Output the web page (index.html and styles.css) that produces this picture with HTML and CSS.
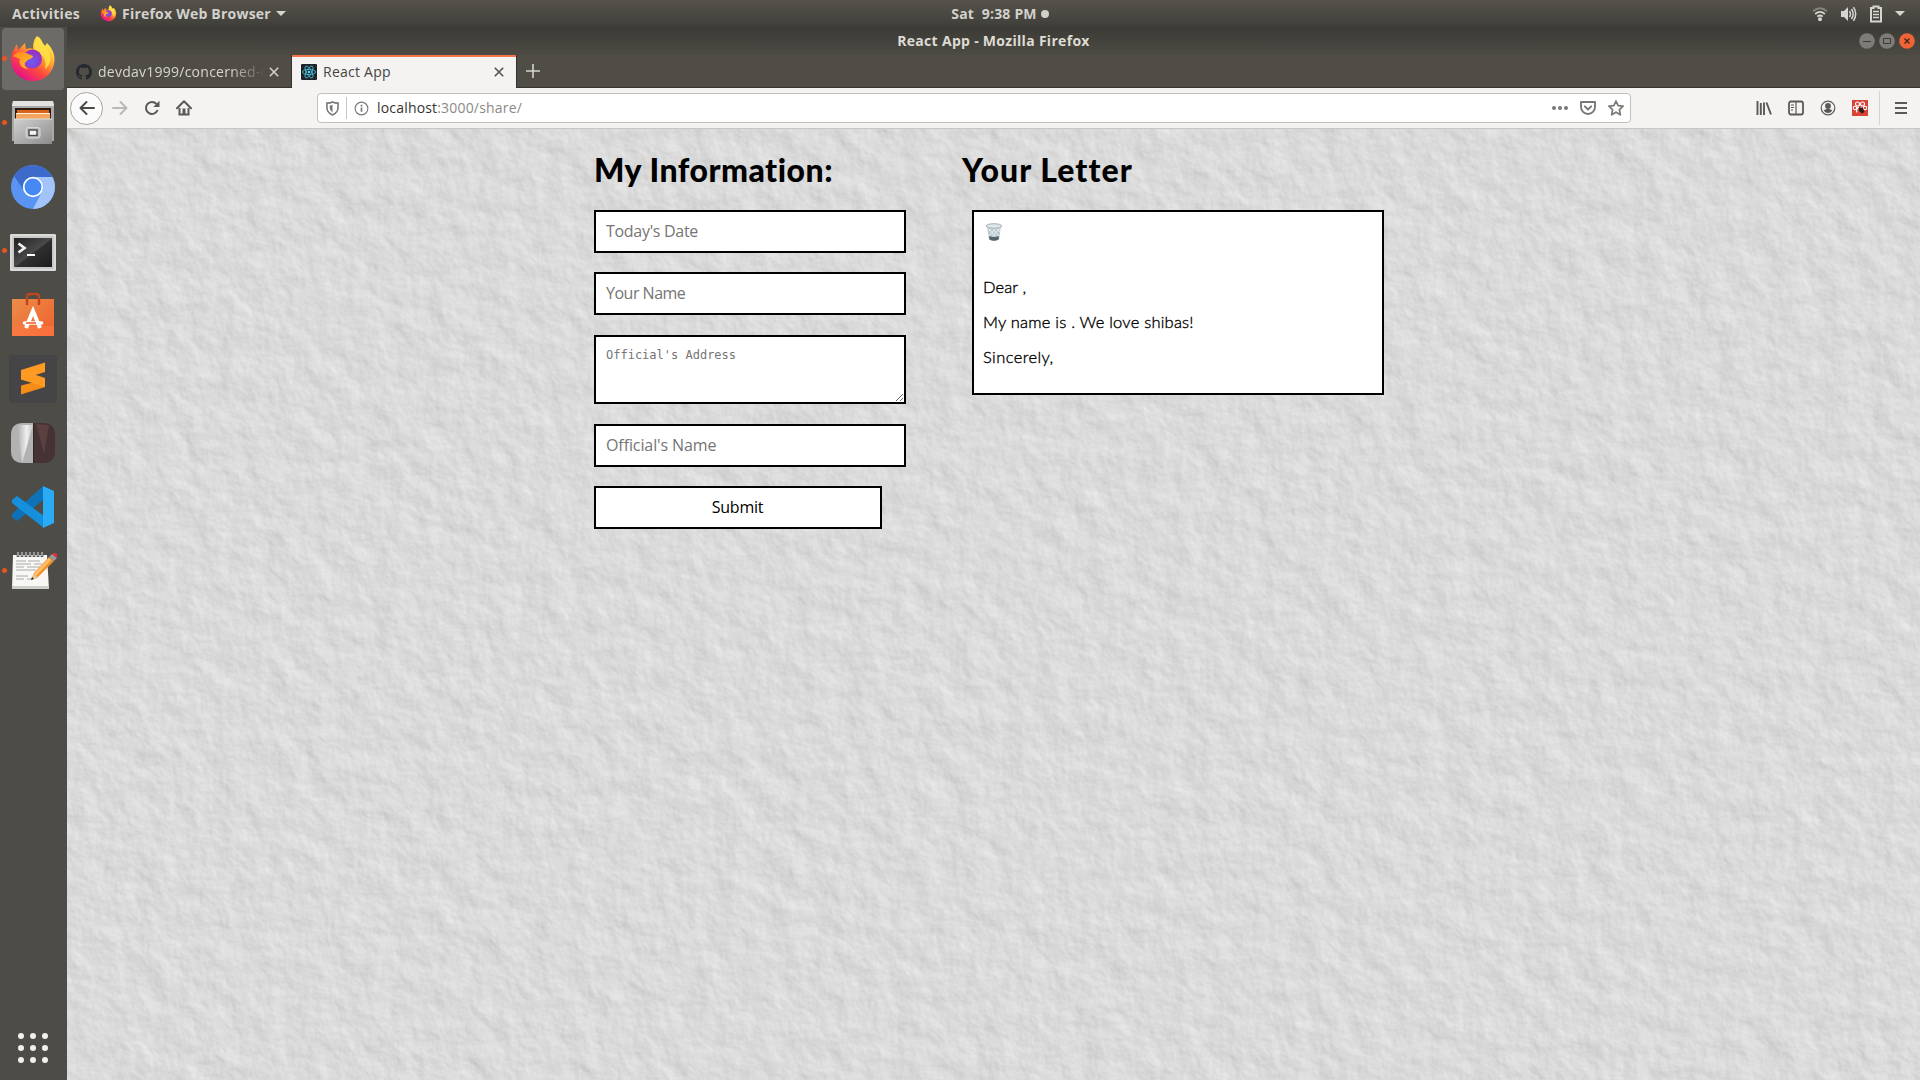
FILE: index.html
```html
<!DOCTYPE html>
<html lang="en">
<head>
<meta charset="utf-8">
<title>React App</title>
<link rel="stylesheet" href="styles.css">
</head>
<body>
<div class="desktop">
  <header class="topbar">
    <div class="topbar-left">
      <span class="activities">Activities</span>
      <svg class="mini-fox" viewBox="0 0 48 48"><use href="#fox"/></svg>
      <span class="app-name">Firefox Web Browser</span>
      <span class="caret"></span>
    </div>
    <div class="clock"><span>Sat&nbsp; 9:38 PM</span><i class="clock-dot"></i></div>
    <div class="tray">
      <svg width="16" height="16" viewBox="0 0 16 16" fill="none" stroke="#d6d5d2" stroke-width="1.8"><path d="M1 5.2Q8-.8 15 5.2" stroke="#85837d"/><path d="M3.2 8Q8 3.8 12.8 8M5.3 10.6Q8 8.3 10.7 10.6"/><circle cx="8" cy="13.3" r="2" fill="#d6d5d2" stroke="none"/></svg>
      <svg width="17" height="16" viewBox="0 0 17 16"><path d="M1 5h3l4-4v14l-4-4H1z" fill="#d6d5d2"/><path d="M9.500 5q2 3 0 6M11.500 3q3.400 5 0 10M13.500 1.200q4.400 6.800 0 13.600" fill="none" stroke="#d6d5d2" stroke-width="1.500"/></svg>
      <svg width="14" height="18" viewBox="0 0 14 18"><path d="M2 3h2.500V1.500h5V3H12v13.500H2z" fill="none" stroke="#d6d5d2" stroke-width="2"/><path d="M4 6.500h6M4 9.500h6M4 12.500h6" stroke="#d6d5d2" stroke-width="1.700"/></svg>
      <span class="caret"></span>
    </div>
  </header>
  <div class="below">
    <nav class="dock">
      <div class="dock-item active running">
        <svg viewBox="0 0 48 48">
          <defs>
            <linearGradient id="fx1" x1=".85" y1=".1" x2=".25" y2=".95"><stop offset="0" stop-color="#fff44f"/><stop offset=".35" stop-color="#ffa930"/><stop offset=".65" stop-color="#ff4a3c"/><stop offset="1" stop-color="#e3118b"/></linearGradient>
            <radialGradient id="fx2" cx=".45" cy=".65" r=".6"><stop offset="0" stop-color="#6a5cf5"/><stop offset="1" stop-color="#9a2fc0"/></radialGradient>
            <linearGradient id="fx3" x1="0" y1="0" x2="1" y2="1"><stop offset="0" stop-color="#ff8a1e"/><stop offset="1" stop-color="#ffc02e"/></linearGradient>
          </defs>
          <g id="fox">
            <path d="M28 1c5 3 5 8 8 10l2-3c5 5 7.500 10 7.500 16C45.500 37 36 46 24 46S2 37 2 25C2 18 5 14 8 9l1 6 7-7 1 6c3-1 5-1 7 0 0-6 1-10 4-13z" fill="url(#fx1)"/>
            <path d="M30 2c3 3 3 6 7 10 6 7 6 17-1 22 2-8-1-14-9-18-4-5-1-10 3-14z" fill="#ffe247" opacity=".85"/>
            <circle cx="23.500" cy="24" r="9.500" fill="url(#fx2)"/>
            <path d="M4 21c4-4 9-5 13-3l7 3c0 3-6 3-8 7-1 3 1 5 4 6-7 0-11-5-9-10z" fill="url(#fx3)"/>
          </g>
        </svg>
      </div>
      <div class="dock-item running">
        <svg viewBox="0 0 48 48">
          <defs><linearGradient id="gr" x1="0" y1="0" x2="1" y2="1"><stop offset="0" stop-color="#d0d0d0"/><stop offset="1" stop-color="#8c8c8c"/></linearGradient></defs>
          <path d="M4 2h40l1 4v36H3V6z" fill="#a9a9a9"/><path d="M4 2h40l1 5H3z" fill="#e2e2e2"/>
          <path d="M6 9h36v12H6z" fill="#2b1b12"/><path d="M8 11h32v9H8z" fill="#d8641c"/><path d="M7 14h34v6H7z" fill="#f3a55f"/><path d="M7 14.500h34" stroke="#fff1dc"/>
          <path d="M5 20h38v25H5z" fill="url(#gr)"/><path d="M5 20h38" stroke="#dedede"/>
          <rect x="17" y="28.500" width="14" height="10.500" rx="2" fill="#bcbcbc" stroke="#d7d7d7"/><rect x="20" y="31" width="8" height="5.500" fill="#f4f4f4" stroke="#474747" stroke-width="1.400"/>
        </svg>
      </div>
      <div class="dock-item">
        <svg viewBox="0 0 48 48"><circle cx="24" cy="24" r="22" fill="#5a94f2"/><path d="M5 13A22 22 0 0 1 43.500 14H24a10 10 0 0 0-9.500 13z" fill="#3c6bcb"/><path d="M24 14h19.500A22 22 0 0 1 24 46l8.800-17A10 10 0 0 0 24 14z" fill="#a3c3fb"/><circle cx="24" cy="24" r="9.300" fill="#4688f4" stroke="#fff" stroke-width="1.700"/></svg>
      </div>
      <div class="dock-item running">
        <svg viewBox="0 0 48 48"><defs><linearGradient id="tm" x1="0" y1="0" x2="1" y2="1"><stop offset="0" stop-color="#222"/><stop offset=".5" stop-color="#4a4a4a"/><stop offset=".52" stop-color="#303030"/><stop offset="1" stop-color="#1c1c1c"/></linearGradient></defs><rect x="1" y="7" width="46" height="37" rx="1.500" fill="#c9c9c9"/><rect x="2" y="8" width="44" height="35" fill="none" stroke="#ececec"/><rect x="5" y="11" width="38" height="29" fill="url(#tm)"/><path d="M9.500 16.500l6 4.500-6 4.500" fill="none" stroke="#f2f2f2" stroke-width="2.700"/><path d="M18 28h8" stroke="#fff" stroke-width="2"/></svg>
      </div>
      <div class="dock-item">
        <svg viewBox="0 0 48 48"><defs><linearGradient id="sw" x1="0" y1="0" x2="1" y2="1"><stop offset="0" stop-color="#ec8d4a"/><stop offset="1" stop-color="#ef5f2c"/></linearGradient></defs><path d="M3 8h42v37H3z" fill="url(#sw)"/><path d="M3 35h42v10H3z" fill="#ff7a45" opacity=".6"/><path d="M18 14V6q0-3 3-3h6q3 0 3 3v8" fill="none" stroke="#bd451b" stroke-width="2.400"/><path d="M17 37l7-17 7 17" fill="none" stroke="#fff" stroke-width="4"/><path d="M15.500 32h17" stroke="#fff" stroke-width="3.600" stroke-linecap="round"/><path d="M17 32h10" stroke="#eb662f" stroke-width="1.600"/></svg>
      </div>
      <div class="dock-item">
        <svg viewBox="0 0 48 48"><rect width="48" height="48" rx="3" fill="#454547"/><path d="M12 15l24-7.500v9.500L12 24.500z" fill="#ff9a22"/><path d="M36 24.500v7.500L12 39.500v-9z" fill="#f58d17"/><path d="M12 15v9.500L36 32v-9z" fill="#ff9a22"/></svg>
      </div>
      <div class="dock-item">
        <svg viewBox="0 0 48 48"><defs><linearGradient id="wd"><stop offset="0" stop-color="#aaa"/><stop offset=".6" stop-color="#fff"/><stop offset="1" stop-color="#ccc"/></linearGradient></defs><path d="M24 4H14Q2 4 2 16v16q0 12 12 12h10z" fill="#b2b2b2"/><path d="M8 6l5 38L24 6z" fill="url(#wd)" opacity=".8"/><path d="M25 4h9q12 0 12 12v16q0 12-12 12h-9z" fill="#453232"/><path d="M27 5l8 30 5-29z" fill="#5a4040"/><path d="M24.500 4v40" stroke="#302828"/></svg>
      </div>
      <div class="dock-item">
        <svg viewBox="0 0 48 48"><path d="M34 3L3 31v3l5 4 26-21z" fill="#0d72b8"/><path d="M3 17l5-4 27 20v12L3 20z" fill="#168fdd"/><path d="M34 3l11 5v32l-11 5z" fill="#2baaf5"/></svg>
      </div>
      <div class="dock-item running">
        <svg viewBox="0 0 48 48"><path d="M4 8h34l2 34H3z" fill="#f7f7f3"/><path d="M3 39h37v3H3z" fill="#cfcfca"/><path d="M7 14h10m2 0h12M7 17h15m3 0h8M7 20h8m3 0h13M7 23h20M7 29h12M7 32h8m3 0h6" stroke="#aaa" stroke-width="1"/><path d="M9 5v5m4-5v5m4-5v5m4-5v5m4-5v5m4-5v5m4-5v5" stroke="#555" stroke-width="2.600"/><path d="M9 5v4m4-4v4m4-4v4m4-4v4m4-4v4m4-4v4m4-4v4" stroke="#ddd" stroke-width="1"/><path d="M22 33l3-7L40 10l5 4-16 16z" fill="#f3922b"/><path d="M25 27l15-16 2 2-15 16z" fill="#ffc06b"/><path d="M22 33l3-6 4 4z" fill="#e9c79b"/><path d="M22 33l1-3 2 2z" fill="#222"/><path d="M40 10l3-3 5 4-3 3z" fill="#999"/><path d="M43 7q3-2 5 0v4z" fill="#e9303c"/></svg>
      </div>
      <div class="app-grid"><i></i><i></i><i></i><i></i><i></i><i></i><i></i><i></i><i></i></div>
    </nav>
    <section class="window">
      <div class="titlebar">
        <span class="win-title">React App - Mozilla Firefox</span>
        <div class="win-btns">
          <svg viewBox="0 0 16 16"><circle cx="8" cy="8" r="7.800" fill="#7d7c77"/><path d="M4 8.500h8" stroke="#3c3b37"/></svg>
          <svg viewBox="0 0 16 16"><circle cx="8" cy="8" r="7.800" fill="#7d7c77"/><path d="M4.500 5.500h7v5h-7z" fill="none" stroke="#3c3b37"/></svg>
          <svg viewBox="0 0 16 16"><circle cx="8" cy="8" r="7.800" fill="#ef6337"/><path d="M5.500 5.500l5 5m0-5l-5 5" stroke="#40281c" stroke-width="1.400"/></svg>
        </div>
      </div>
      <div class="tabs">
        <div class="tab">
          <svg class="fav" viewBox="0 0 16 16"><path fill="#24292e" d="M8 0C3.580 0 0 3.580 0 8c0 3.540 2.290 6.530 5.470 7.590.4.070.55-.17.55-.38 0-.19-.01-.82-.01-1.490-2.010.37-2.530-.49-2.690-.94-.09-.23-.48-.94-.82-1.130-.28-.15-.68-.52-.01-.53.63-.01 1.080.58 1.230.82.72 1.210 1.870.87 2.330.66.070-.52.280-.87.510-1.070-1.780-.2-3.640-.89-3.640-3.950 0-.87.310-1.590.82-2.150-.08-.2-.36-1.020.08-2.120 0 0 .67-.21 2.200.82.64-.18 1.320-.27 2-.27s1.360.09 2 .27c1.530-1.040 2.200-.82 2.200-.82.44 1.100.16 1.920.08 2.120.51.56.82 1.270.82 2.150 0 3.070-1.870 3.750-3.650 3.950.29.25.54.73.54 1.480 0 1.070-.01 1.930-.01 2.200 0 .21.15.46.55.38A8.010 8.010 0 0 0 16 8c0-4.420-3.580-8-8-8z"/></svg>
          <span class="tab-label faded">devdav1999/concerned-c</span>
          <svg class="close" viewBox="0 0 10 10"><path d="M.8.8l8.400 8.400m0-8.400L.8 9.200" stroke="#d5d3cf" stroke-width="1.500"/></svg>
        </div>
        <div class="tab current">
          <svg class="fav" viewBox="0 0 16 16"><rect width="16" height="16" rx="1" fill="#20232a"/><g fill="none" stroke="#4cc4e0" stroke-width=".8"><ellipse cx="8" cy="8" rx="6.600" ry="2.600"/><ellipse cx="8" cy="8" rx="6.600" ry="2.600" transform="rotate(60 8 8)"/><ellipse cx="8" cy="8" rx="6.600" ry="2.600" transform="rotate(120 8 8)"/></g><circle cx="8" cy="8" r="1.300" fill="#61dafb"/></svg>
          <span class="tab-label">React App</span>
          <svg class="close" viewBox="0 0 10 10"><path d="M.8.8l8.400 8.400m0-8.400L.8 9.200" stroke="#55534f" stroke-width="1.600"/></svg>
        </div>
        <svg class="plus" viewBox="0 0 14 14"><path d="M7 0v14M0 7h14" stroke="#d5d3cf" stroke-width="1.600"/></svg>
      </div>
      <div class="toolbar">
        <span class="back"><svg viewBox="0 0 16 16" fill="none" stroke="#4c4a46" stroke-width="2" stroke-linecap="round" stroke-linejoin="round"><path d="M15 8H1.500M7.500 2L1.500 8l6 6"/></svg></span>
        <svg class="nav" viewBox="0 0 16 16" fill="none" stroke="#bab8b5" stroke-width="2" stroke-linecap="round" stroke-linejoin="round"><path d="M1 8h13.500M8.500 2l6 6-6 6"/></svg>
        <svg class="nav" viewBox="0 0 16 16"><path d="M13.600 10A6 6 0 1 1 12.500 4" fill="none" stroke="#5b5955" stroke-width="2"/><path d="M15.500.8V7H9.300z" fill="#5b5955"/></svg>
        <svg class="nav" viewBox="0 0 16 16"><path d="M1 8.300l7-7 7 7" fill="none" stroke="#5b5955" stroke-width="2" stroke-linecap="round" stroke-linejoin="round"/><path d="M3.500 8v6.500h9V8" fill="none" stroke="#5b5955" stroke-width="2"/><path d="M6.500 14V8.500h3V14z" fill="#5b5955"/></svg>
        <div class="urlbar">
          <svg class="shield" viewBox="0 0 14 16"><path d="M7 1c2 1 4 1.200 6 1.200V7c0 4-2.500 6.500-6 8C3.500 13.500 1 11 1 7V2.200C3 2.200 5 2 7 1z" fill="none" stroke="#7a7875" stroke-width="1.700"/><path d="M7 4q-1.500.7-3 .8V7c0 2.500 1.200 4 3 5z" fill="#7a7875"/></svg>
          <i class="sep"></i>
          <svg class="info" viewBox="0 0 16 16"><circle cx="8" cy="8" r="6.800" fill="none" stroke="#7a7875" stroke-width="1.200"/><path d="M8 7v4.500M8 4v1.800" stroke="#7a7875" stroke-width="1.800"/></svg>
          <span class="url"><span class="host">localhost</span><span class="path">:3000/share/</span></span>
          <svg class="dots" viewBox="0 0 16 16" fill="#7a7875"><circle cx="2" cy="8" r="2"/><circle cx="8" cy="8" r="2"/><circle cx="14" cy="8" r="2"/></svg>
          <svg class="uico" viewBox="0 0 16 16" fill="none" stroke="#7a7875" stroke-width="1.900" stroke-linecap="round" stroke-linejoin="round"><path d="M1 2h14v5a7 7 0 0 1-14 0z"/><path d="M4.800 6.300L8 9.500l3.200-3.200"/></svg>
          <svg class="uico" viewBox="0 0 16 16" fill="none" stroke="#7a7875" stroke-width="1.700" stroke-linejoin="round"><path d="M8 1l2.100 4.700 5 .5-3.700 3.400 1 5.200L8 12.200l-4.400 2.600 1-5.200L.9 6.200l5-.5z"/></svg>
        </div>
        <div class="tools">
          <svg viewBox="0 0 16 16" stroke="#5b5955" stroke-width="1.900"><path d="M1.500 1v14M4.800 3v12M8 2.500V15M10.500 2.500l4.500 12"/></svg>
          <svg viewBox="0 0 16 16" fill="none" stroke="#5b5955" stroke-width="1.800"><rect x="1" y="1.500" width="14" height="13" rx="2"/><path d="M8 1.500v13" stroke-width="1.200"/><path d="M3 5h3M3 7.500h3M3 10h2" stroke-width="1"/></svg>
          <svg viewBox="0 0 16 16"><circle cx="8" cy="8" r="6.800" fill="none" stroke="#5b5955" stroke-width="1.200"/><circle cx="8" cy="6" r="2.900" fill="#5b5955"/><path d="M3.600 10q1.800 0 2.800-1h3.200q1 1 2.800 1-1.400 3-4.400 3t-4.400-3z" fill="#5b5955"/></svg>
          <svg viewBox="0 0 16 16"><rect width="16" height="16" fill="#da4334"/><g fill="none" stroke="#fff" stroke-width="1.100"><circle cx="5.500" cy="4" r="2"/><circle cx="10.500" cy="4" r="2"/><circle cx="3" cy="8" r="1.700"/><circle cx="13" cy="8" r="1.700"/><path d="M5 12.500q-1.500-2.500 1-5h4"/></g><path d="M7 7l4 1 1.500 4-2.500 1.500L7 11z" fill="#2a1b18"/></svg>
          <i class="tool-sep"></i>
          <svg viewBox="0 0 16 16"><path d="M2 3h12M2 8h12M2 13h12" stroke="#5b5955" stroke-width="2"/></svg>
        </div>
      </div>
      <main class="page">
        <svg class="paper" width="1853" height="951">
          <filter id="rough" x="0" y="0" width="100%" height="100%" color-interpolation-filters="sRGB">
            <feTurbulence type="fractalNoise" baseFrequency="0.038" numOctaves="4" seed="7"/>
            <feDiffuseLighting surfaceScale=".85" diffuseConstant="1" lighting-color="#fcfcfc"><feDistantLight azimuth="315" elevation="60"/></feDiffuseLighting>
          </filter>
          <rect width="1853" height="951" filter="url(#rough)"/>
        </svg>
        <div class="columns">
          <form class="info-form">
            <h1 class="h-info">My Information:</h1>
            <input class="f-date" placeholder="Today's Date">
            <input class="f-name" placeholder="Your Name">
            <textarea placeholder="Official's Address"></textarea>
            <input class="f-official" placeholder="Official's Name">
            <button type="button">Submit</button>
          </form>
          <div class="letter-col">
            <h1 class="h-letter">Your Letter</h1>
            <article class="letter">
              <svg class="trash" viewBox="0 0 18 19"><path d="M2 3l2 13.500q5 2.500 10 0L16 3z" fill="#b9c7cf"/><path d="M3 5l10 11M6 4l8 9M10 4l5 5M15 5L5 16M12 4l-8 9M8 4L4 8" stroke="#eef3f5" stroke-width=".9"/><path d="M4 13l.5 3.500q4.500 2.500 9 0L14 13q-5 2-10 0z" fill="#51626c"/><ellipse cx="9" cy="3" rx="7.800" ry="2.300" fill="#dfe6e9" stroke="#9aa9b1" stroke-width=".9"/></svg>
              <p class="greeting">Dear ,</p>
              <p class="message">My name is . We love shibas!</p>
              <p>Sincerely,</p>
            </article>
          </div>
        </div>
      </main>
    </section>
  </div>
</div>
</body>
</html>
```
FILE: styles.css
```css
* { box-sizing: border-box; }
body { margin: 0; width: 1920px; height: 1080px; overflow: hidden; font-family: "Open Sans", "Noto Sans", sans-serif; }
svg { display: block; flex: none; }
i { display: block; flex: none; }
.desktop { display: flex; flex-direction: column; height: 1080px; }

.topbar { display: grid; grid-template-columns: 1fr auto 1fr; align-items: center; height: 27px; background: linear-gradient(#56534b, #3f3e39); color: #d3d1cd; font-size: 14px; font-weight: 700; line-height: 25px; white-space: nowrap; }
.topbar > div { height: 26px; }
.topbar-left { display: flex; align-items: center; padding-left: 12px; }
.activities { width: 88px; letter-spacing: .3px; }
.app-name { letter-spacing: .22px; }
.mini-fox { width: 17px; height: 17px; margin-right: 5px; }
.caret { width: 0; height: 0; border: 5px solid transparent; border-top-color: #d6d5d2; border-bottom: 0; margin-left: 5px; }
.clock { display: flex; align-items: center; gap: 4px; padding-left: 80px; letter-spacing: .2px; }
.clock-dot { width: 8px; height: 8px; border-radius: 50%; background: #d0cfcc; }
.tray { display: flex; align-items: center; justify-content: flex-end; padding-right: 15px; gap: 12px; }
.tray .caret { margin-left: 0; }

.below { display: flex; flex: 1; min-height: 0; }
.dock { display: flex; flex-direction: column; width: 67px; background: #4d4c47; }
.dock-item { position: relative; display: flex; align-items: center; height: 64px; padding-left: 9px; }
.dock-item svg { width: 48px; height: 48px; position: relative; }
.dock-item.active::before { content: ""; position: absolute; left: 2px; top: 1px; width: 62px; height: 62px; border-radius: 4px; background: #6c6b67; }
.dock-item.running::after { content: ""; position: absolute; left: 2px; top: 29px; width: 5px; height: 5px; border-radius: 50%; background: #e95420; }
.app-grid { display: grid; grid-template-columns: repeat(3, 6px); gap: 6px; margin: auto 0 17px 18px; }
.app-grid i { width: 6px; height: 6px; border-radius: 50%; background: #f0f0ee; }

.window { display: flex; flex-direction: column; flex: 1; min-width: 0; }
.titlebar { display: grid; grid-template-columns: 1fr; height: 28px; background: linear-gradient(#3b3a36, #4c4a43); }
.win-title { grid-area: 1 / 1; justify-self: center; color: #dedbd3; font-size: 14px; font-weight: 700; line-height: 28px; letter-spacing: .3px; }
.win-btns { grid-area: 1 / 1; justify-self: end; display: flex; gap: 4px; padding: 6px 5px 0 0; }
.win-btns svg { width: 16px; height: 16px; }
.tabs { display: flex; height: 33px; background: #504d46; border-bottom: 1px solid #35332f; }
.tab { display: flex; flex: none; align-items: center; width: 224px; padding: 1px 0 0 9px; color: #d8d6d1; font-size: 14px; letter-spacing: .25px; }
.tab.current { width: 226px; height: 33px; margin-bottom: -1px; background: #f4f3f2; color: #46443f; border: solid #35332f; border-width: 0 1px; box-shadow: inset 0 2px #f27649; }
.fav { width: 16px; height: 16px; margin-right: 6px; }
.tab-label { width: 167px; overflow: hidden; line-height: 24px; white-space: nowrap; }
.tab-label.faded { -webkit-mask-image: linear-gradient(90deg, #000 132px, transparent 167px); mask-image: linear-gradient(90deg, #000 132px, transparent 167px); }
.close { width: 10px; height: 10px; margin-left: 4px; }
.plus { width: 14px; height: 14px; margin: 9px 0 0 9px; }

.toolbar { display: flex; align-items: center; height: 41px; padding-left: 3px; background: #f4f3f2; border-bottom: 1px solid #c9c5c0; }
.back { display: flex; align-items: center; justify-content: center; width: 33px; height: 33px; border: 1px solid #a6a4a0; border-radius: 50%; background: #fbfbfb; }
.back svg { width: 16px; height: 16px; }
.nav { width: 16px; height: 16px; margin-left: 16px; }
.back + .nav { margin-left: 9px; }
.urlbar { display: flex; align-items: center; width: 1314px; height: 30px; margin-left: 125px; padding-left: 8px; background: #fff; border: 1px solid #c4c0bb; border-radius: 4px; }
.shield { width: 13px; height: 15px; }
.sep { width: 1px; height: 22px; margin: 0 7px; background: #c9c7c4; }
.info { width: 15px; height: 15px; }
.url { flex: 1; margin-left: 8px; font-size: 14px; line-height: 28px; letter-spacing: .18px; white-space: nowrap; }
.host { color: #35332f; }
.path { color: #8b8985; }
.dots, .uico { width: 16px; height: 16px; margin-right: 12px; }
.uico:last-child { margin-right: 6px; }
.tools { display: flex; align-items: center; margin-left: 125px; gap: 16px; }
.tools svg { width: 16px; height: 16px; }
.tool-sep { width: 1px; height: 34px; margin: 0 -5px; background: #d4d2cf; }
.tool-sep + svg { margin-left: 2px; }

.page { position: relative; flex: 1; overflow: hidden; background: #dadada; }
.paper { position: absolute; left: 0; top: 0; }
.columns { position: relative; display: flex; gap: 56px; padding-left: 527px; color: #000; }
h1 { margin: 0; padding-top: 20px; height: 81px; font: 900 32px/42px Lato, sans-serif; font-variant-ligatures: none; white-space: nowrap; }
.h-info { letter-spacing: .5px; }
.h-letter { letter-spacing: 1.05px; }
.info-form { display: flex; flex-direction: column; width: 312px; }
input, textarea, button { display: block; margin: 0 0 19px; padding: 0 10px 2px; border: 2px solid #000; border-radius: 0; background: #fff; color: #000; font: 16px "Open Sans", "Noto Sans", sans-serif; }
input, button { height: 43px; }
.f-date { letter-spacing: -.3px; }
.f-name { margin-bottom: 20px; letter-spacing: -.5px; }
.f-official { letter-spacing: -.1px; }
textarea { height: 69px; margin-bottom: 20px; padding: 10px; font: 12px/16px "DejaVu Sans Mono", monospace; }
button { width: 288px; padding-right: 11px; letter-spacing: -.2px; }
::placeholder { color: #757575; opacity: 1; }
.letter-col { width: 422px; }
.letter { width: 412px; height: 185px; margin-left: 10px; padding: 10px 9px; border: 2px solid #000; background: #fff; font: 300 16.5px/19px Lato, sans-serif; letter-spacing: .4px; -webkit-text-stroke: .35px #000; }
.trash { width: 18px; height: 19px; margin: 1px 0 36px 2px; }
.letter p { margin: 0 0 16px; }
.letter .greeting { letter-spacing: .1px; }
.letter .message { letter-spacing: .22px; }
```
